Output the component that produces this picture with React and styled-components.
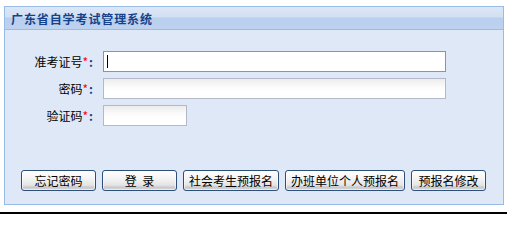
import React from "react";
import styled, { createGlobalStyle } from "styled-components";

const Global = createGlobalStyle`
  html, body { margin: 0; padding: 0; background: #fff; }
  body { font-family: "Noto Sans CJK SC", "Noto Sans", sans-serif; font-size: 12px; }
  #root { width: 507px; height: 214px; position: relative; overflow: hidden; }
`;

const Page = styled.div`
  height: 214px;
  display: flex;
  flex-direction: column;
  box-sizing: border-box;
  padding: 6px 0 0 4px;
`;

const Panel = styled.div`
  width: 500px;
  height: 199px;
  box-sizing: border-box;
  border: 1px solid #99bbe8;
  background: #dfe8f6;
  display: flex;
  flex-direction: column;
`;

const Header = styled.div`
  height: 22px;
  border-bottom: 1px solid #99bbe8;
  background: linear-gradient(#dce7f6 0%, #d2e0f3 45%, #b9cfee 50%, #bdd2ef 100%);
  display: flex;
  align-items: center;
  padding-left: 6px;
  font-weight: bold;
  font-size: 12px;
  color: #15428b;
  letter-spacing: 0.9px;
`;

const Body = styled.div`
  flex: 1;
  display: flex;
  flex-direction: column;
  padding: 21px 0 0 0;
`;

const Form = styled.div`
  display: flex;
  flex-direction: column;
  gap: 6px;
`;

const Row = styled.div`
  display: flex;
  align-items: center;
  height: 21px;
`;

const Label = styled.label`
  width: 88px;
  text-align: right;
  margin-right: 10px;
  color: #000;
  font-size: 12px;
  line-height: 21px;
`;

const Star = styled.span`
  color: #ff0000;
`;

const Colon = styled.span`
  color: #15428b;
  font-weight: bold;
  margin-left: 1px;
`;

const FieldWrap = styled.div`
  position: relative;
  display: flex;
`;

const Field = styled.input`
  box-sizing: border-box;
  width: ${(p) => p.$w}px;
  height: 21px;
  margin: 0;
  padding: 0 3px;
  outline: none;
  font-size: 12px;
  border: 1px solid ${(p) => (p.$focus ? "#d9776c" : "#b5b8c8")};
  background: ${(p) =>
    p.$focus ? "#fff" : "linear-gradient(#ececec 0px, #fbfbfb 8px, #fff 12px)"};
`;

const Caret = styled.span`
  position: absolute;
  left: 4px;
  top: 4px;
  width: 1px;
  height: 13px;
  background: #000;
`;

const Buttons = styled.div`
  margin-top: auto;
  margin-bottom: 13px;
  padding-left: 16px;
  display: flex;
  gap: 6px;
`;

const Btn = styled.button`
  box-sizing: border-box;
  min-width: 75px;
  height: 21px;
  padding: 0 5px;
  margin: 0;
  border: 1px solid #2c4f7c;
  border-radius: 3px;
  background: linear-gradient(#ffffff 0%, #f4f4f4 40%, #e4e4e4 75%, #c9c9c9 85%, #d8d8d8 100%);
  font-family: "Noto Sans CJK SC", "Noto Sans", sans-serif;
  font-size: 12px;
  color: #000;
  line-height: 19px;
  white-space: pre;
  box-shadow: inset 0 0 0 1px #ffffff88;
`;

const Rule = styled.div`
  margin-top: auto;
  margin-left: -4px;
  height: 2px;
  background: #000;
`;

const fields = [
  { label: "准考证号", w: 343, focus: true },
  { label: "密码", w: 343 },
  { label: "验证码", w: 84 },
];

const buttons = ["忘记密码", "登  录", "社会考生预报名", "办班单位个人预报名", "预报名修改"];

export default function App() {
  return (
    <>
      <Global />
      <Page>
        <Panel>
          <Header>广东省自学考试管理系统</Header>
          <Body>
            <Form>
              {fields.map((f) => (
                <Row key={f.label}>
                  <Label>
                    {f.label}
                    <Star>*</Star>
                    <Colon>:</Colon>
                  </Label>
                  <FieldWrap>
                    <Field $w={f.w} $focus={f.focus} type={f.label === "密码" ? "password" : "text"} />
                    {f.focus && <Caret />}
                  </FieldWrap>
                </Row>
              ))}
            </Form>
            <Buttons>
              {buttons.map((b) => (
                <Btn key={b}>{b}</Btn>
              ))}
            </Buttons>
          </Body>
        </Panel>
        <Rule />
      </Page>
    </>
  );
}
